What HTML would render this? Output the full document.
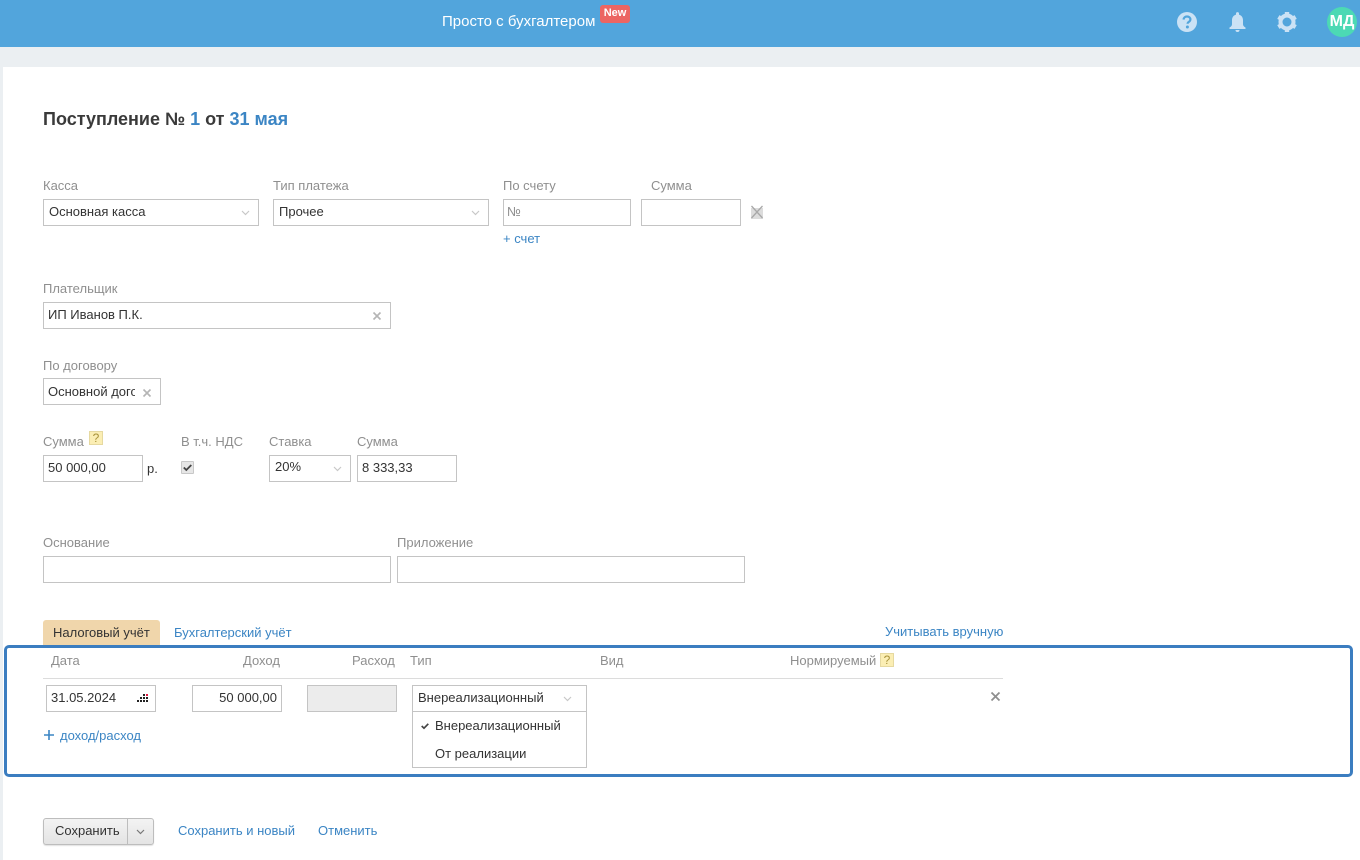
<!DOCTYPE html>
<html lang="ru"><head><meta charset="utf-8"><title>Поступление</title>
<style>
html,body{margin:0;padding:0;width:1360px;height:860px;overflow:hidden;background:#ebeff2}
body{position:relative;font-family:"Liberation Sans",Arial,sans-serif;font-size:13px;color:#333}
.a,.t,.l,.b,.i{position:absolute;box-sizing:border-box}
.t,.l{white-space:nowrap;line-height:14px}
.t{color:#333}
.g{position:absolute;white-space:nowrap;line-height:14px;color:#8f8f8f}
.l{color:#3b85c4}
.b{border:1px solid #c4c4c4;background:#fff}
.h{position:absolute;width:14px;height:14px;background:#fbeeb4;border:1px solid #e6d9a0;color:#a8923a;font-size:12px;line-height:12px;text-align:center;box-sizing:border-box}
svg{position:absolute;display:block;overflow:visible}
</style></head><body>
<div class="a" style="left:0;top:0;width:1360px;height:47px;background:#52a5dc"></div>
<div class="a" style="left:3px;top:67px;width:1357px;height:793px;background:#fff"></div>

<div class="t" style="left:442px;top:13px;color:#fff;font-size:15px;line-height:18px">Просто с бухгалтером</div>
<div class="a" style="left:600px;top:5px;width:30px;height:18px;background:#ec6562;border-radius:3px;color:#fff;font-size:11px;font-weight:bold;text-align:center;line-height:17px">New</div>

<svg style="left:1177px;top:12px" width="20" height="20" viewBox="0 0 20 20"><circle cx="10" cy="10" r="10" fill="#cbe2f5"/><path d="M6.6 7.6C6.7 5.6 8.1 4.5 10 4.500c2 0 3.400 1.200 3.400 2.900 0 1.400-.8 2-1.700 2.600-.8.5-1.100.9-1.100 1.800" fill="none" stroke="#52a5dc" stroke-width="2.200"/><circle cx="10.400" cy="15" r="1.500" fill="#52a5dc"/></svg>
<svg style="left:1229px;top:12px" width="17" height="20" viewBox="0 0 17 20"><path d="M7 2.600V1.600a1.500 1.500 0 0 1 3 0v1c2.700.8 4 3 4 5.600v4c0 1.500 1 2.500 2.500 3.300V17H.5v-1.500C2 14.700 3 13.700 3 12.200v-4C3 5.600 4.300 3.400 7 2.600z" fill="#cbe2f5"/><path d="M6.500 18h4a2 2 0 0 1-4 0z" fill="#cbe2f5"/></svg>
<svg style="left:1277px;top:12px" width="20" height="20" viewBox="0 0 20 20"><circle cx="10" cy="10" r="6.500" fill="none" stroke="#cbe2f5" stroke-width="4"/><g fill="#cbe2f5"><rect x="7.800" y="0" width="4.400" height="4"/><rect x="7.800" y="16" width="4.400" height="4"/><rect x="7.800" y="0" width="4.400" height="4" transform="rotate(60 10 10)"/><rect x="7.800" y="0" width="4.400" height="4" transform="rotate(120 10 10)"/><rect x="7.800" y="0" width="4.400" height="4" transform="rotate(240 10 10)"/><rect x="7.800" y="0" width="4.400" height="4" transform="rotate(300 10 10)"/></g></svg>
<div class="a" style="left:1327px;top:7px;width:30px;height:30px;border-radius:50%;background:#4cd9b4;color:#fff;font-weight:bold;font-size:16px;line-height:30px;text-align:center;white-space:nowrap">МД</div>

<div class="t" style="left:43px;top:109px;font-size:18px;line-height:20px;font-weight:bold;color:#3a3a3a">Поступление № <span style="color:#3b85c4">1</span> от <span style="color:#3b85c4">31 мая</span></div>

<div class="g" style="left:43px;top:179px">Касса</div>
<div class="b" style="left:43px;top:199px;width:216px;height:27px"></div>
<div class="t" style="left:49px;top:205px">Основная касса</div>
<svg style="left:241px;top:210px" width="9" height="6"><path d="M1 1 4.500 4.500 8 1" fill="none" stroke="#c8c8c8" stroke-width="1.200"/></svg>

<div class="g" style="left:273px;top:179px">Тип платежа</div>
<div class="b" style="left:273px;top:199px;width:216px;height:27px"></div>
<div class="t" style="left:279px;top:205px">Прочее</div>
<svg style="left:471px;top:210px" width="9" height="6"><path d="M1 1 4.500 4.500 8 1" fill="none" stroke="#c8c8c8" stroke-width="1.200"/></svg>

<div class="g" style="left:503px;top:179px">По счету</div>
<div class="b" style="left:503px;top:199px;width:128px;height:27px"></div>
<div class="g" style="left:507px;top:205px">№</div>
<div class="g" style="left:651px;top:179px">Сумма</div>
<div class="b" style="left:641px;top:199px;width:100px;height:27px"></div>
<div class="a" style="left:751px;top:208px;width:12px;height:11px;background:#dcdcdc"></div>
<svg style="left:751px;top:205px" width="12" height="14"><path d="M.5 1 11.500 13M11.500 1 .5 13" stroke="#a8a8a8" stroke-width="1.300"/></svg>
<div class="l" style="left:503px;top:232px">+ счет</div>

<div class="g" style="left:43px;top:282px">Плательщик</div>
<div class="b" style="left:43px;top:302px;width:348px;height:27px"></div>
<div class="t" style="left:48px;top:308px">ИП Иванов П.К.</div>
<svg style="left:373px;top:312px" width="8" height="8"><path d="M.5.5 7.500 7.500M7.500.5 .5 7.500" stroke="#b5b5b5" stroke-width="1.600"/></svg>

<div class="g" style="left:43px;top:359px">По договору</div>
<div class="b" style="left:43px;top:378px;width:118px;height:27px"></div>
<div class="t" style="left:48px;top:385px;width:87px;overflow:hidden">Основной договор</div>
<svg style="left:143px;top:389px" width="8" height="8"><path d="M.5.5 7.500 7.500M7.500.5 .5 7.500" stroke="#b5b5b5" stroke-width="1.600"/></svg>

<div class="g" style="left:43px;top:435px">Сумма</div>
<div class="h" style="left:89px;top:431px">?</div>
<div class="b" style="left:43px;top:455px;width:100px;height:27px"></div>
<div class="t" style="left:48px;top:461px">50 000,00</div>
<div class="t" style="left:147px;top:462px">р.</div>
<div class="g" style="left:181px;top:435px">В т.ч. НДС</div>
<div class="a" style="left:181px;top:461px;width:13px;height:13px;background:#e6e6e6;border:1px solid #c8c8c8;border-radius:1px"></div>
<svg style="left:183px;top:464px" width="9" height="7"><path d="M.8 3.500 3.300 6 8.300 1" fill="none" stroke="#444" stroke-width="1.800"/></svg>
<div class="g" style="left:269px;top:435px">Ставка</div>
<div class="b" style="left:269px;top:455px;width:82px;height:27px"></div>
<div class="t" style="left:275px;top:460px">20%</div>
<svg style="left:333px;top:466px" width="9" height="6"><path d="M1 1 4.500 4.500 8 1" fill="none" stroke="#c8c8c8" stroke-width="1.200"/></svg>
<div class="g" style="left:357px;top:435px">Сумма</div>
<div class="b" style="left:357px;top:455px;width:100px;height:27px"></div>
<div class="t" style="left:362px;top:461px">8 333,33</div>

<div class="g" style="left:43px;top:536px">Основание</div>
<div class="b" style="left:43px;top:556px;width:348px;height:27px"></div>
<div class="g" style="left:397px;top:536px">Приложение</div>
<div class="b" style="left:397px;top:556px;width:348px;height:27px"></div>

<div class="a" style="left:43px;top:620px;width:117px;height:26px;background:#f0d6ab;border-radius:3px 3px 0 0"></div>
<div class="t" style="left:53px;top:626px">Налоговый учёт</div>
<div class="l" style="left:174px;top:626px">Бухгалтерский учёт</div>
<div class="l" style="left:885px;top:625px">Учитывать вручную</div>

<div class="a" style="left:4px;top:645px;width:1349px;height:132px;border:3px solid #3b7dc0;border-radius:5px"></div>

<div class="g" style="left:51px;top:654px">Дата</div>
<div class="g" style="left:243px;top:654px">Доход</div>
<div class="g" style="left:352px;top:654px">Расход</div>
<div class="g" style="left:410px;top:654px">Тип</div>
<div class="g" style="left:600px;top:654px">Вид</div>
<div class="g" style="left:790px;top:654px">Нормируемый</div>
<div class="h" style="left:880px;top:653px">?</div>
<div class="a" style="left:43px;top:678px;width:960px;height:1px;background:#dcdcdc"></div>

<div class="b" style="left:46px;top:685px;width:110px;height:27px"></div>
<div class="t" style="left:51px;top:691px">31.05.2024</div>
<svg style="left:137px;top:694px" width="12" height="9"><g fill="#222"><rect x="0" y="6" width="2" height="2"/><rect x="3" y="3" width="2" height="2"/><rect x="3" y="6" width="2" height="2"/><rect x="6" y="0" width="2" height="2"/><rect x="6" y="3" width="2" height="2"/><rect x="6" y="6" width="2" height="2"/><rect x="9" y="3" width="2" height="2"/><rect x="9" y="6" width="2" height="2"/></g><rect x="9" y="0" width="2" height="2" fill="#e5173f"/></svg>
<div class="b" style="left:192px;top:685px;width:90px;height:27px"></div>
<div class="t" style="left:192px;top:691px;width:85px;text-align:right">50 000,00</div>
<div class="b" style="left:307px;top:685px;width:90px;height:27px;background:#ececec"></div>

<div class="b" style="left:412px;top:685px;width:175px;height:83px"></div>
<div class="a" style="left:413px;top:711px;width:173px;height:1px;background:#c4c4c4"></div>
<div class="t" style="left:418px;top:691px">Внереализационный</div>
<svg style="left:563px;top:696px" width="9" height="6"><path d="M1 1 4.500 4.500 8 1" fill="none" stroke="#c8c8c8" stroke-width="1.200"/></svg>
<svg style="left:421px;top:723px" width="8" height="6"><path d="M.7 3 3 5.200 7.300.8" fill="none" stroke="#444" stroke-width="1.700"/></svg>
<div class="t" style="left:435px;top:719px">Внереализационный</div>
<div class="t" style="left:435px;top:747px">От реализации</div>

<svg style="left:991px;top:692px" width="9" height="9"><path d="M.5.5 8.500 8.500M8.500.5 .5 8.500" stroke="#8f8f8f" stroke-width="1.800"/></svg>

<svg style="left:44px;top:730px" width="10" height="10"><path d="M5 0V10M0 5H10" stroke="#3b85c4" stroke-width="1.600"/></svg>
<div class="l" style="left:60px;top:729px">доход/расход</div>

<div class="a" style="left:43px;top:818px;width:111px;height:27px;background:linear-gradient(#f3f3f3,#e4e4e4);border:1px solid #bdbdbd;border-radius:3px;box-shadow:0 1px 1px rgba(0,0,0,.12)"></div>
<div class="a" style="left:127px;top:819px;width:1px;height:25px;background:#bdbdbd"></div>
<div class="t" style="left:55px;top:824px">Сохранить</div>
<svg style="left:136px;top:829px" width="9" height="6"><path d="M1 1 4.500 4.500 8 1" fill="none" stroke="#777" stroke-width="1.200"/></svg>
<div class="l" style="left:178px;top:824px">Сохранить и новый</div>
<div class="l" style="left:318px;top:824px">Отменить</div>
</body></html>
